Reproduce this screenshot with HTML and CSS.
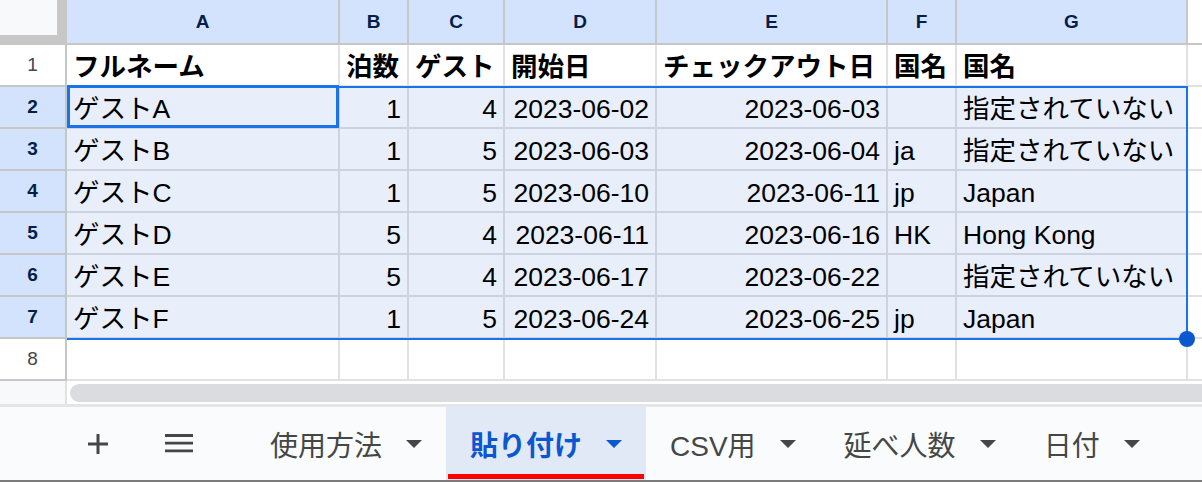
FILE: index.html
```html
<!DOCTYPE html>
<html lang="ja">
<head>
<meta charset="utf-8">
<title>Sheet</title>
<link rel="stylesheet" href="styles.css">
</head>
<body>
<div class="sheet">
  <div class="grid">
    <div class="corner"></div>
    <div class="ch">A</div><div class="ch">B</div><div class="ch">C</div><div class="ch">D</div><div class="ch">E</div><div class="ch">F</div><div class="ch">G</div><div class="ch-end"></div>

    <div class="rh">1</div>
    <div class="c hd">フルネーム</div><div class="c hd">泊数</div><div class="c hd">ゲスト</div><div class="c hd">開始日</div><div class="c hd">チェックアウト日</div><div class="c hd">国名</div><div class="c hd">国名</div><div class="c end"></div>

    <div class="rh sel">2</div>
    <div class="c sel">ゲストA</div><div class="c sel num">1</div><div class="c sel num">4</div><div class="c sel num">2023-06-02</div><div class="c sel num">2023-06-03</div><div class="c sel"></div><div class="c sel">指定されていない</div><div class="c end"></div>

    <div class="rh sel">3</div>
    <div class="c sel">ゲストB</div><div class="c sel num">1</div><div class="c sel num">5</div><div class="c sel num">2023-06-03</div><div class="c sel num">2023-06-04</div><div class="c sel">ja</div><div class="c sel">指定されていない</div><div class="c end"></div>

    <div class="rh sel">4</div>
    <div class="c sel">ゲストC</div><div class="c sel num">1</div><div class="c sel num">5</div><div class="c sel num">2023-06-10</div><div class="c sel num">2023-06-11</div><div class="c sel">jp</div><div class="c sel">Japan</div><div class="c end"></div>

    <div class="rh sel">5</div>
    <div class="c sel">ゲストD</div><div class="c sel num">5</div><div class="c sel num">4</div><div class="c sel num">2023-06-11</div><div class="c sel num">2023-06-16</div><div class="c sel">HK</div><div class="c sel">Hong Kong</div><div class="c end"></div>

    <div class="rh sel">6</div>
    <div class="c sel">ゲストE</div><div class="c sel num">5</div><div class="c sel num">4</div><div class="c sel num">2023-06-17</div><div class="c sel num">2023-06-22</div><div class="c sel"></div><div class="c sel">指定されていない</div><div class="c end"></div>

    <div class="rh sel">7</div>
    <div class="c sel">ゲストF</div><div class="c sel num">1</div><div class="c sel num">5</div><div class="c sel num">2023-06-24</div><div class="c sel num">2023-06-25</div><div class="c sel">jp</div><div class="c sel">Japan</div><div class="c end"></div>

    <div class="rh">8</div>
    <div class="c"></div><div class="c"></div><div class="c"></div><div class="c"></div><div class="c"></div><div class="c"></div><div class="c"></div><div class="c end"></div>
  </div>
  <div class="range"></div>
  <div class="active-cell"></div>
  <div class="fill-handle"></div>
</div>

<div class="hscroll">
  <div class="hs-left"></div>
  <div class="hs-track"><div class="thumb"></div></div>
</div>

<div class="tabbar">
  <div class="tool add">
    <svg width="20" height="20" viewBox="0 0 20 20"><path d="M10 0V20M0 10H20" stroke="#444746" stroke-width="3" fill="none"/></svg>
  </div>
  <div class="tool menu">
    <svg width="28" height="19" viewBox="0 0 28 19"><path d="M0 1.5H28M0 9.2H28M0 16.9H28" stroke="#444746" stroke-width="2.8" fill="none"/></svg>
  </div>
  <div class="tabs">
    <div class="tab"><span>使用方法</span><span class="caret"></span></div>
    <div class="tab active"><span>貼り付け</span><span class="caret"></span></div>
    <div class="tab"><span>CSV用</span><span class="caret"></span></div>
    <div class="tab"><span>延べ人数</span><span class="caret"></span></div>
    <div class="tab"><span>日付</span><span class="caret"></span></div>
  </div>
</div>
<div class="dock"></div>
</body>
</html>
```

FILE: styles.css
```css
* { box-sizing: border-box; }

body {
  margin: 0;
  width: 1202px;
  height: 482px;
  overflow: hidden;
  background: #fff;
  font-family: "Liberation Sans", "Noto Sans CJK JP", sans-serif;
}

.sheet { position: relative; }

.grid {
  display: grid;
  grid-template-columns: 67px 273px 69px 96px 152px 231px 69px 231px 14px;
  grid-template-rows: 45px repeat(8, 42px);
}

.corner {
  background: #f8f9fa;
  border-right: 10px solid #c7c7c7;
  border-bottom: 10px solid #c7c7c7;
}

.ch {
  display: flex;
  align-items: center;
  justify-content: center;
  font-size: 19px;
  font-weight: bold;
  color: #041e49;
  background: #d3e3fd;
  border-right: 2px solid #c4c7c5;
  border-bottom: 2px solid #c4c7c5;
}

.ch-end {
  background: #fff;
  border-bottom: 2px solid #c4c7c5;
}

.rh {
  display: flex;
  align-items: center;
  justify-content: center;
  font-size: 19px;
  color: #444746;
  background: #fff;
  border-right: 2px solid #c4c7c5;
  border-bottom: 2px solid #c4c7c5;
}

.rh.sel {
  background: #d3e3fd;
  color: #041e49;
  font-weight: bold;
}

.c {
  display: flex;
  align-items: center;
  padding: 4px 6px 0;
  font-size: 26.5px;
  line-height: 30px;
  color: #000;
  white-space: nowrap;
  overflow: hidden;
  border-right: 2px solid #e1e1e1;
  border-bottom: 2px solid #e1e1e1;
}

.c.sel {
  background: #e8eefa;
  border-color: #cdd3dd;
}

.c.num { justify-content: flex-end; }
.c.hd { font-weight: bold; }
.c.end { border-right: 0; }

.range {
  position: absolute;
  left: 67px;
  top: 86px;
  width: 1121px;
  height: 254px;
  border: 2px solid #1a73e8;
  border-left: 0;
}

.active-cell {
  position: absolute;
  left: 67px;
  top: 85px;
  width: 272px;
  height: 43px;
  border: 3px solid #1a73e8;
}

.fill-handle {
  position: absolute;
  left: 1179px;
  top: 331px;
  width: 16px;
  height: 16px;
  border-radius: 50%;
  background: #0b57d0;
}

.hscroll {
  display: flex;
  height: 23px;
}

.hs-left {
  width: 67px;
  background: #f8f9fa;
  border-right: 2px solid #e1e1e1;
}

.hs-track {
  flex: 1;
  overflow: hidden;
  padding: 3px 0 2px 3px;
  background: #fff;
}

.thumb {
  width: 1200px;
  height: 18px;
  border-radius: 9px;
  background: #dadce0;
}

.tabbar {
  display: flex;
  align-items: stretch;
  height: 76px;
  border-top: 3px solid #e3e5e8;
  background: #f9fbfd;
}

.tool {
  width: 48px;
  display: flex;
  align-items: center;
  justify-content: center;
}

.tool.add { margin-left: 74px; }
.tool.menu { margin-left: 33px; }

.tabs {
  display: flex;
  margin-left: 43px;
}

.tab {
  position: relative;
  display: flex;
  align-items: center;
  gap: 24px;
  padding: 0 24px;
  font-size: 28px;
  color: #444746;
  white-space: nowrap;
}

.tab .caret {
  width: 0;
  height: 0;
  border-left: 8px solid transparent;
  border-right: 8px solid transparent;
  border-top: 8px solid currentColor;
}

.tab.active {
  background: #e1e9f7;
  color: #0b57d0;
  font-weight: bold;
}

.tab.active::after {
  content: "";
  position: absolute;
  left: 2px;
  right: 2px;
  bottom: 1px;
  height: 5px;
  background: #ff0000;
}

.dock {
  height: 2px;
  background: #7b7b7b;
}
```
